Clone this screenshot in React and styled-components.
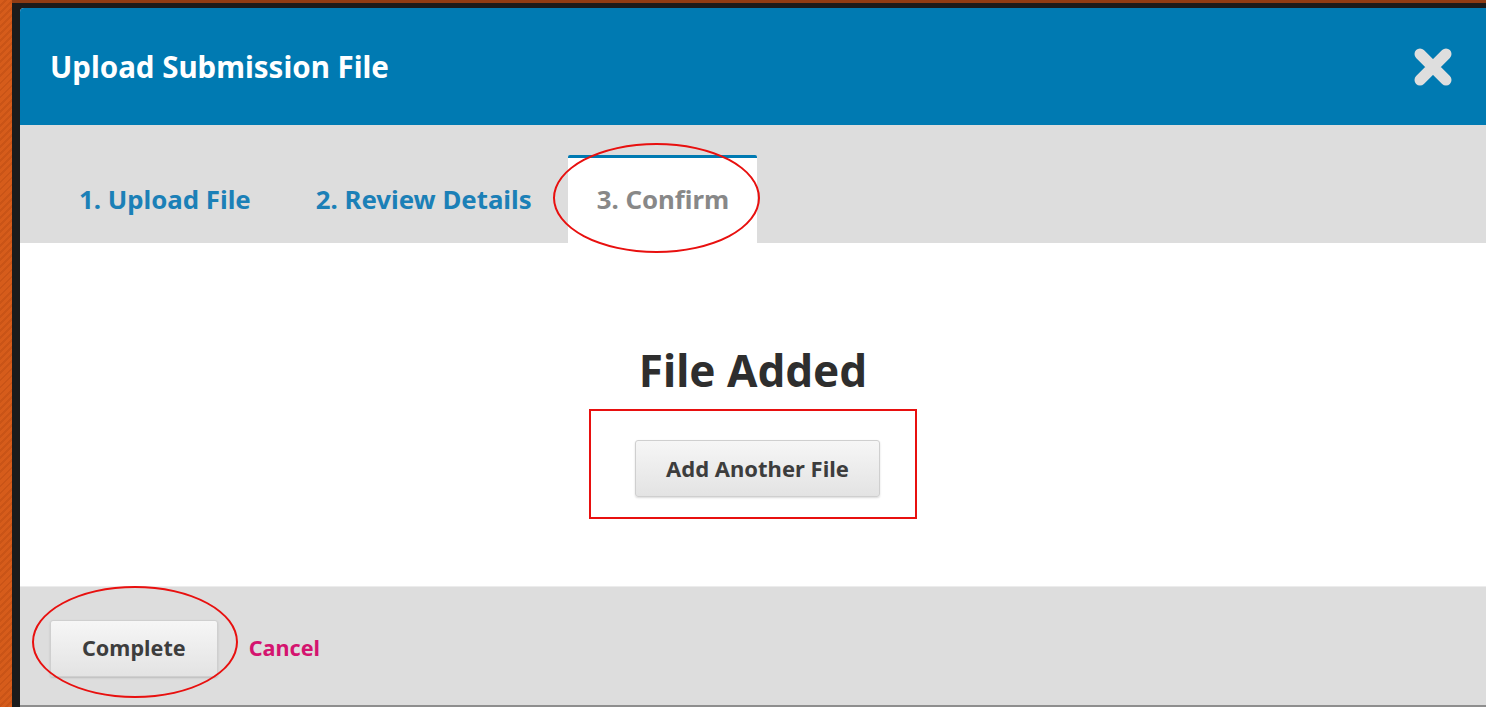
import styled, { createGlobalStyle } from 'styled-components';

const GlobalStyle = createGlobalStyle`
  *, *::before, *::after {
    box-sizing: border-box;
  }

  html, body {
    margin: 0;
    padding: 0;
    height: 100%;
  }

  body {
    font-family: 'Noto Sans', 'Open Sans', sans-serif;
    overflow: hidden;
  }
`;

const Page = styled.div`
  display: flex;
  height: 100vh;
  background: #1b1b1b;
`;

const SiteEdge = styled.div`
  width: 12px;
  flex-shrink: 0;
  background: repeating-linear-gradient(
    135deg,
    #d65c1b 0 3px,
    #c95417 3px 5px
  );
`;

const Backdrop = styled.div`
  flex: 1;
  display: flex;
  border-top: 3px solid #8f3c14;
  padding: 5px 0 0 8px;
  min-width: 0;
`;

const Modal = styled.div`
  flex: 1;
  display: flex;
  flex-direction: column;
  background: #fff;
  border-radius: 4px 0 0 0;
  overflow: hidden;
  border-bottom: 2px solid #8e8e8e;
`;

const Header = styled.header`
  height: 117px;
  flex-shrink: 0;
  display: flex;
  align-items: center;
  justify-content: space-between;
  padding: 0 33px 0 30px;
  background: #007ab2;
`;

const Title = styled.h1`
  margin: 0;
  color: #fff;
  font-size: 29.5px;
  font-weight: 700;
`;

const CloseButton = styled.button`
  width: 40px;
  height: 40px;
  padding: 0;
  border: 0;
  background: none;
  cursor: pointer;
  display: flex;

  svg {
    width: 40px;
    height: 40px;
  }
`;

const TabBar = styled.nav`
  height: 118px;
  flex-shrink: 0;
  display: flex;
  align-items: flex-end;
  gap: 8px;
  padding: 0 30px;
  background: #ddd;
`;

const Tab = styled.div`
  position: relative;
  height: 88px;
  display: flex;
  align-items: center;
  padding: 0 28px 4px 29px;
  font-size: 25.8px;
  font-weight: 700;
  color: ${(props) => (props.$active ? '#888' : '#1b80b7')};
  background: ${(props) => (props.$active ? '#fff' : 'transparent')};
  border-top: 3px solid
    ${(props) => (props.$active ? '#007ab2' : 'transparent')};
  border-radius: 2px 2px 0 0;
`;

const Ellipse = styled.span`
  position: absolute;
  left: ${(props) => props.$left}px;
  top: ${(props) => props.$top}px;
  width: ${(props) => props.$w}px;
  height: ${(props) => props.$h}px;
  border: 2px solid #e8100f;
  border-radius: 50%;
  pointer-events: none;
`;

const Body = styled.main`
  flex: 1;
  display: flex;
  flex-direction: column;
  align-items: center;
  padding-top: 102px;
  background: #fff;
`;

const Heading = styled.h2`
  margin: 0 0 14px;
  height: 50px;
  line-height: 50px;
  font-size: 44px;
  font-weight: 700;
  color: #2e2e2e;
`;

const Highlight = styled.div`
  border: 2px solid #e8100f;
  padding: 29px 35px 20px 44px;
`;

const Button = styled.button`
  height: 57px;
  padding: 0 ${(props) => props.$pad || 30}px 2px;
  font-family: inherit;
  font-size: ${(props) => props.$size || 22}px;
  font-weight: 700;
  color: #3d3d3d;
  background: linear-gradient(#f6f6f6, #e3e3e3);
  border: 1px solid #cfcfcf;
  border-radius: 3px;
  box-shadow: 0 1px 2px rgba(0, 0, 0, 0.15);
  cursor: pointer;
`;

const Footer = styled.footer`
  flex-shrink: 0;
  height: 119px;
  display: flex;
  align-items: flex-start;
  padding: 33px 30px 0;
  background: #ddd;
  border-top: 1px solid #ececec;
`;

const Anchor = styled.div`
  position: relative;
`;

const CancelLink = styled.a`
  margin-left: 31px;
  line-height: 55px;
  font-size: 21.6px;
  font-weight: 700;
  color: #d4146f;
  text-decoration: none;
  cursor: pointer;
`;

function CloseIcon() {
  return (
    <svg viewBox="0 0 40 40" aria-hidden="true">
      <path
        d="M7 7 L33 33 M33 7 L7 33"
        stroke="#dedede"
        strokeWidth="11"
        strokeLinecap="round"
      />
    </svg>
  );
}

const tabs = ['1. Upload File', '2. Review Details', '3. Confirm'];

export default function App() {
  return (
    <>
      <GlobalStyle />
      <Page>
        <SiteEdge />
        <Backdrop>
          <Modal>
            <Header>
              <Title>Upload Submission File</Title>
              <CloseButton aria-label="Close">
                <CloseIcon />
              </CloseButton>
            </Header>

            <TabBar>
              {tabs.map((label, i) => {
                const active = i === tabs.length - 1;
                return (
                  <Tab key={label} $active={active}>
                    {label}
                    {active && <Ellipse $left={-15} $top={-15} $w={207} $h={110} />}
                  </Tab>
                );
              })}
            </TabBar>

            <Body>
              <Heading>File Added</Heading>
              <Highlight>
                <Button $pad={30}>Add Another File</Button>
              </Highlight>
            </Body>

            <Footer>
              <Anchor>
                <Button $pad={31} $size={21.6}>Complete</Button>
                <Ellipse $left={-18} $top={-34} $w={206} $h={112} />
              </Anchor>
              <CancelLink>Cancel</CancelLink>
            </Footer>
          </Modal>
        </Backdrop>
      </Page>
    </>
  );
}
